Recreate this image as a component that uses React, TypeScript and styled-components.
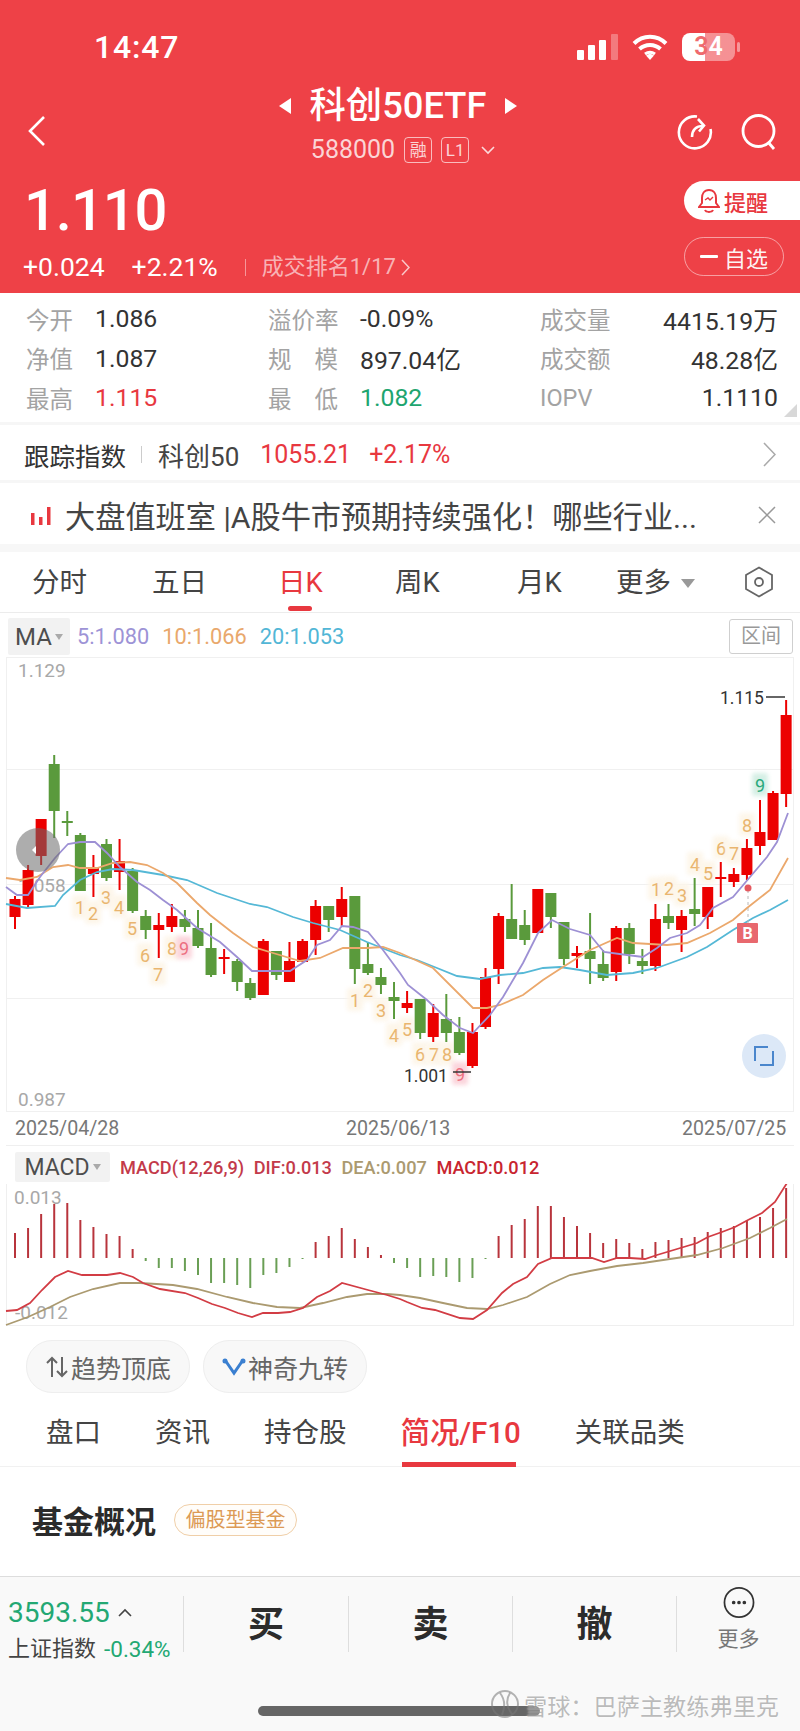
import React from 'react';
import styled, { createGlobalStyle } from 'styled-components';

const FONT = '"Roboto","Noto Sans CJK SC",sans-serif';
const RED = '#e8383f';

const Global = createGlobalStyle`
  html, body { margin: 0; padding: 0; background: #fff; }
  * { box-sizing: border-box; }
  body { font-family: ${FONT}; }
`;

const Page = styled.div`
  position: relative;
  width: 800px;
  height: 1731px;
  overflow: hidden;
  background: #fff;
`;

/* header */
const Header = styled.header`
  height: 293px;
  background: #ee4147;
  color: #fff;
  display: flex;
  flex-direction: column;
`;
const StatusBar = styled.div`
  height: 86px;
  padding: 8px 65px 0 94px;
  display: flex;
  align-items: center;
  justify-content: space-between;
`;
const Time = styled.div`
  font-size: 32px;
  font-weight: 500;
  letter-spacing: 0.8px;
`;
const StatusIcons = styled.div`
  display: flex;
  align-items: center;
  gap: 14px;
`;
const Battery = styled.div`
  position: relative;
  width: 53px;
  height: 28px;
  border-radius: 8px;
  background: linear-gradient(90deg, #fff 0 43%, rgba(255, 255, 255, 0.42) 43% 100%);
  font-size: 25px;
  font-weight: 600;
  line-height: 28px;
  text-align: center;
  &::after {
    content: '';
    position: absolute;
    right: -5px;
    top: 9px;
    width: 3px;
    height: 10px;
    border-radius: 2px;
    background: rgba(255, 255, 255, 0.45);
  }
`;
const BatteryDigit = styled.span<{ $c: string }>`
  color: ${p => p.$c};
`;
const NavRow = styled.div`
  height: 89px;
  padding: 0 22px 0 28px;
  display: grid;
  grid-template-columns: 1fr auto 1fr;
  align-items: center;
`;
const NavRight = styled.div`
  display: flex;
  justify-content: flex-end;
  gap: 28px;
  padding-top: 4px;
`;
const NavCenter = styled.div`
  align-self: start;
  display: flex;
  flex-direction: column;
  align-items: center;
  gap: 10px;
  margin-left: -10px;
`;
const TitleRow = styled.div`
  display: flex;
  align-items: center;
  gap: 19px;
  font-size: 36.3px;
  line-height: 40px;
  font-weight: 500;
`;
const SubRow = styled.div`
  display: flex;
  align-items: center;
  font-size: 25px;
  line-height: 28px;
  color: rgba(255, 255, 255, 0.78);
  margin-left: 10px;
`;
const Badge = styled.span`
  width: 28px;
  height: 26px;
  margin-left: 9px;
  border: 1px solid rgba(255, 255, 255, 0.65);
  border-radius: 4px;
  font-size: 17px;
  line-height: 24px;
  text-align: center;
`;
const QuoteRow = styled.div`
  flex: 1;
  display: flex;
  justify-content: space-between;
  align-items: flex-start;
  padding: 4px 0 0 23px;
`;
const PriceCol = styled.div`
  display: flex;
  flex-direction: column;
`;
const Price = styled.div`
  font-size: 58px;
  line-height: 62px;
  font-weight: 500;
  letter-spacing: -1.1px;
  margin-left: 1px;
`;
const ChangeRow = styled.div`
  display: flex;
  align-items: center;
  margin-top: 11px;
  font-size: 26.5px;
  line-height: 30px;
  font-weight: 400;
`;
const Change = styled.span`
  margin-right: 27px;
  &:last-of-type { margin-right: 19px; }
`;
const VBar = styled.i`
  width: 1px;
  height: 17px;
  background: rgba(255, 255, 255, 0.45);
  margin-right: 16px;
`;
const Rank = styled.span`
  display: flex;
  align-items: center;
  gap: 5px;
  font-size: 22px;
  font-weight: 400;
  color: rgba(255, 255, 255, 0.62);
`;
const ActionCol = styled.div`
  display: flex;
  flex-direction: column;
  gap: 17px;
  width: 116px;
  margin-top: 2px;
`;
const Remind = styled.div`
  height: 39px;
  border-radius: 20px 0 0 20px;
  background: #fff;
  color: ${RED};
  font-size: 22px;
  font-weight: 500;
  display: flex;
  align-items: center;
  padding-left: 14px;
  gap: 4px;
`;
const Watch = styled.div`
  width: 100px;
  height: 39px;
  border-radius: 20px;
  border: 1px solid rgba(255, 255, 255, 0.5);
  font-size: 22px;
  display: flex;
  align-items: center;
  justify-content: center;
  gap: 6px;
  color: rgba(255, 255, 255, 0.95);
`;

/* quote grid */
const QuoteGrid = styled.section`
  position: relative;
  height: 132px;
  padding: 6px 22px 0 26px;
  display: grid;
  grid-template-columns: 242px 272px 1fr;
  grid-auto-rows: 39.5px;
  border-bottom: 3px solid #f6f6f6;
`;
const Cell = styled.div`
  display: flex;
  align-items: center;
  font-size: 24.8px;
`;
const Label = styled.span<{ $w: number }>`
  width: ${p => p.$w}px;
  display: flex;
  justify-content: space-between;
  color: #a3a3a3;
  font-size: 23.5px;
  flex: none;
`;
const Spread = styled.span`
  width: 70px;
  display: flex;
  justify-content: space-between;
`;
const Value = styled.span<{ $c?: string; $end?: boolean }>`
  color: ${p => p.$c || '#333'};
  font-weight: 400;
  ${p => (p.$end ? 'margin-left: auto;' : '')}
`;
const Corner = styled.i`
  position: absolute;
  right: 3px;
  bottom: 5px;
  border-style: solid;
  border-width: 0 0 13px 13px;
  border-color: transparent transparent #d8d8d8 transparent;
`;

/* track */
const TrackRow = styled.section`
  height: 58px;
  padding: 4px 24px 0;
  display: flex;
  align-items: center;
  font-size: 25px;
  border-bottom: 3px solid #f6f6f6;
`;
const TrackTitle = styled.span`
  color: #333;
  font-size: 25.5px;
  margin-right: 15px;
`;
const TrackName = styled.span`
  color: #444;
  font-size: 26px;
  margin: 0 21px 0 16px;
`;
const TrackNum = styled.span`
  color: ${RED};
  font-weight: 400;
  font-size: 25px;
  margin-right: 18px;
`;
const TrackThin = styled.i`
  width: 1px;
  height: 17px;
  background: #ccc;
`;
const Push = styled.span`
  margin-left: auto;
  display: flex;
`;

/* news */
const NewsRow = styled.section`
  height: 69px;
  padding: 3px 24px 0 31px;
  display: flex;
  align-items: center;
  gap: 14px;
  border-bottom: 8px solid #f7f7f7;
`;
const NewsText = styled.span`
  font-size: 30.2px;
  color: #444;
  white-space: nowrap;
`;

/* K tabs */
const KTabs = styled.nav`
  position: relative;
  height: 61px;
  padding-left: 32px;
  display: flex;
  align-items: center;
  border-bottom: 1px solid #ececec;
`;
const KTab = styled.span<{ $x: number; $on?: boolean }>`
  position: absolute;
  left: ${p => p.$x}px;
  top: 13px;
  font-size: 27.5px;
  line-height: 36px;
  color: ${p => (p.$on ? RED : '#444')};
`;
const KMark = styled.i`
  position: absolute;
  left: 288px;
  bottom: 1px;
  width: 24px;
  height: 5px;
  border-radius: 3px;
  background: ${RED};
`;
const KTri = styled.i`
  position: absolute;
  left: 681px;
  top: 27px;
  border-style: solid;
  border-width: 9px 7px 0 7px;
  border-color: #999 transparent transparent transparent;
`;
const KGear = styled.span`
  position: absolute;
  left: 744px;
  top: 14px;
  display: flex;
`;

/* MA */
const MaRow = styled.section`
  height: 44px;
  padding: 3px 7px 0 8px;
  display: flex;
  align-items: center;
  font-size: 21.8px;
`;
const Chip = styled.div<{ $w: number }>`
  width: ${p => p.$w}px;
  height: 37px;
  background: #f2f2f2;
  border-radius: 2px;
  color: #4e4e4e;
  font-size: 24px;
  display: flex;
  align-items: center;
  justify-content: center;
  gap: 3px;
`;
const ChipTri = styled.i`
  border-style: solid;
  border-width: 6px 4.5px 0 4.5px;
  border-color: #aaa transparent transparent transparent;
`;
const MaVal = styled.span<{ $c: string; $first?: boolean }>`
  color: ${p => p.$c};
  margin-left: ${p => (p.$first ? 7 : 13)}px;
`;
const Range = styled.span`
  margin-left: auto;
  width: 64px;
  height: 35px;
  border: 1px solid #cfcfcf;
  border-radius: 3px;
  color: #999;
  font-size: 20px;
  line-height: 33px;
  text-align: center;
`;

/* charts */
const ChartSvg = styled.svg`
  display: block;
  width: 800px;
`;
const AxisText = styled.text`
  font-family: ${FONT};
  font-size: 19px;
  fill: #a8a8a8;
`;
const PeakText = styled.text`
  font-family: ${FONT};
  font-size: 17.5px;
  fill: #333;
`;
const TdText = styled.text<{ $c: string }>`
  font-family: ${FONT};
  font-size: 18px;
  text-anchor: middle;
  fill: ${p => p.$c};
`;
const TdGlow = styled.rect`
  filter: blur(2px);
`;
const BText = styled.text`
  font-family: ${FONT};
  font-size: 16px;
  font-weight: 700;
  fill: #fff;
  text-anchor: middle;
`;
const DateRow = styled.div`
  height: 34px;
  margin: 0 6px;
  padding: 0 8px 0 9px;
  display: grid;
  grid-template-columns: 331px 336px 1fr;
  align-items: center;
  font-size: 19.6px;
  color: #777;
  font-weight: 400;
  border-bottom: 1px solid #efefef;
`;
const MacdHead = styled.div`
  height: 38px;
  padding: 4px 0 0 15px;
  display: flex;
  align-items: center;
  font-size: 18.2px;
  font-weight: 500;
`;
const MacdChip = styled(Chip)`
  height: 30px;
  font-size: 23px;
  font-weight: 400;
  margin-right: 10px;
`;
const MacdItem = styled.span<{ $c: string; $last?: boolean }>`
  color: ${p => p.$c};
  margin-right: ${p => (p.$last ? 0 : 9.5)}px;
`;

/* pills */
const PillRow = styled.div`
  height: 67px;
  padding: 14px 0 0 26px;
  display: flex;
  gap: 13px;
`;
const Pill = styled.div`
  width: 164px;
  height: 53px;
  border: 1px solid #eeeeee;
  border-radius: 26px;
  background: #f8f8f8;
  color: #666;
  font-size: 25px;
  display: flex;
  align-items: center;
  justify-content: center;
  gap: 2px;
`;

/* lower tabs */
const InfoTabs = styled.nav`
  position: relative;
  height: 74px;
  display: flex;
  align-items: center;
  padding-left: 46px;
  font-size: 27.5px;
  color: #444;
  border-bottom: 1px solid #f1f1f1;
`;
const InfoTab = styled.span<{ $ml: number; $on?: boolean }>`
  margin-left: ${p => p.$ml}px;
  color: ${p => (p.$on ? RED : '#444')};
  font-size: ${p => (p.$on ? 29.5 : 27.5)}px;
  font-weight: ${p => (p.$on ? 500 : 400)};
`;
const InfoMark = styled.i`
  position: absolute;
  left: 402px;
  bottom: -1px;
  width: 114px;
  height: 5px;
  background: ${RED};
`;

/* fund */
const Fund = styled.section`
  height: 109px;
  padding: 0 0 4px 32px;
  display: flex;
  align-items: center;
  gap: 18px;
`;
const FundTitle = styled.h2`
  margin: 0;
  font-size: 31px;
  font-weight: 700;
  color: #2b2b2b;
`;
const FundTag = styled.span`
  width: 123px;
  height: 32px;
  border: 1px solid #f0cfa8;
  border-radius: 16px;
  background: #fffdfa;
  color: #dc9a55;
  font-size: 20px;
  line-height: 30px;
  text-align: center;
`;

/* bottom */
const Bottom = styled.footer`
  position: relative;
  height: 155px;
  background: #f9f9f9;
  border-top: 1px solid #dddddd;
`;
const BottomBar = styled.div`
  height: 92px;
  padding-top: 17px;
  display: grid;
  grid-template-columns: 183px 165px 164px 164px 1fr;
`;
const IndexCell = styled.div`
  padding-left: 8px;
  margin-top: -5px;
  display: flex;
  flex-direction: column;
  justify-content: center;
  gap: 3px;
`;
const IndexNum = styled.div`
  color: #23a873;
  font-size: 28px;
  line-height: 36px;
  font-weight: 400;
  display: flex;
  align-items: center;
  gap: 8px;
`;
const IndexSub = styled.div`
  display: flex;
  gap: 8px;
  font-size: 22px;
  line-height: 30px;
  color: #444;
`;
const IndexPct = styled.span`
  color: #23a873;
  font-weight: 400;
  font-size: 22.5px;
`;
const Trade = styled.div`
  border-left: 1px solid #dedede;
  height: 56px;
  margin-top: 2px;
  padding-bottom: 6px;
  display: flex;
  align-items: center;
  justify-content: center;
  font-size: 36px;
  font-weight: 700;
  color: #2c2c2c;
`;
const More = styled.div`
  height: 56px;
  margin-top: 2px;
  border-left: 1px solid #dedede;
  display: flex;
  flex-direction: column;
  align-items: center;
  gap: 8px;
  color: #777;
  font-size: 21px;
  line-height: 26px;
  & > svg { margin-top: -9px; }
`;
const Home = styled.i`
  position: absolute;
  left: 258px;
  top: 129px;
  width: 282px;
  height: 10px;
  border-radius: 5px;
  background: #666;
`;
const WaterMark = styled.div`
  position: absolute;
  left: 490px;
  top: 108px;
  display: flex;
  align-items: center;
  gap: 4px;
  font-size: 23.2px;
  color: rgba(120, 120, 120, 0.5);
  text-shadow: 0 0 2px rgba(255, 255, 255, 0.9);
  white-space: nowrap;
`;

/* data */
type C = [number, number, number, number, 'r' | 'g'];
const candles: C[] = [
  [896, 899, 917, 929, 'r'], [865, 870, 905, 908, 'r'], [819, 819, 856, 865, 'r'], [755, 764, 811, 838, 'g'],
  [811, 821, 823, 836, 'g'], [833, 835, 891, 891, 'g'], [855, 868, 874, 897, 'r'], [839, 844, 878, 881, 'g'],
  [839, 861, 872, 890, 'r'], [868, 871, 911, 913, 'g'], [910, 916, 930, 939, 'g'], [913, 925, 930, 958, 'r'],
  [904, 916, 927, 932, 'r'], [910, 919, 927, 932, 'g'], [910, 928, 946, 948, 'g'], [923, 948, 975, 977, 'g'],
  [949, 957, 959, 974, 'r'], [959, 961, 982, 991, 'g'], [978, 983, 998, 1000, 'g'], [939, 941, 995, 995, 'r'],
  [951, 951, 975, 980, 'g'], [942, 961, 982, 982, 'r'], [939, 941, 962, 962, 'r'], [900, 906, 940, 955, 'r'],
  [906, 906, 920, 932, 'g'], [887, 899, 917, 926, 'r'], [896, 896, 969, 984, 'g'], [942, 964, 973, 975, 'g'],
  [968, 977, 985, 994, 'g'], [982, 997, 1001, 1019, 'g'], [991, 1003, 1008, 1013, 'r'], [999, 999, 1033, 1039, 'g'],
  [1004, 1013, 1037, 1042, 'r'], [994, 1019, 1033, 1042, 'g'], [1017, 1032, 1053, 1055, 'g'], [1023, 1032, 1066, 1068, 'r'],
  [968, 977, 1027, 1029, 'r'], [913, 916, 969, 984, 'r'], [884, 919, 939, 939, 'g'], [910, 925, 940, 945, 'g'],
  [889, 889, 933, 933, 'r'], [893, 893, 917, 928, 'g'], [922, 922, 959, 965, 'g'], [946, 953, 956, 968, 'r'],
  [913, 951, 959, 984, 'g'], [950, 964, 978, 981, 'g'], [926, 928, 972, 981, 'r'], [923, 928, 954, 964, 'g'],
  [949, 961, 966, 974, 'g'], [904, 919, 966, 971, 'r'], [904, 916, 923, 929, 'g'], [910, 916, 930, 952, 'r'],
  [878, 909, 914, 926, 'g'], [887, 887, 917, 929, 'r'], [862, 877, 879, 897, 'r'], [868, 874, 882, 887, 'r'],
  [839, 848, 875, 880, 'r'], [800, 832, 846, 855, 'r'], [791, 793, 840, 840, 'r'], [700, 715, 794, 807, 'r'],
];
const cx = (i: number) => 15 + 13.07 * i;

const ma5 = '6,887 17,895 28,895 40,877 55,858 68,844 80,842 95,842 107,853 120,867 137,882 150,890 163,900 177,910 197,928 220,942 237,957 252,971 290,971 307,960 317,945 330,940 342,926 353,927 368,932 383,950 400,973 408,985 427,1000 443,1015 460,1028 473,1033 490,1015 503,997 523,963 538,933 552,920 570,929 590,935 604,952 627,955 643,957 657,948 670,938 687,933 700,925 713,908 733,897 750,877 767,857 777,842 788,813';
const ma10 = '6,878 20,880 37,877 53,867 68,865 80,868 97,868 113,863 130,862 147,865 163,873 177,883 197,903 210,915 233,933 253,947 273,953 300,961 320,958 343,948 367,948 383,947 400,953 433,968 473,1008 487,1008 500,1005 523,995 543,980 563,967 590,950 617,938 633,943 650,944 667,945 687,943 710,933 733,920 747,908 770,890 788,858';
const ma20 = '6,904 27,908 55,906 63,895 80,880 97,872 113,869 133,870 163,875 187,880 217,893 250,904 267,907 293,917 313,923 340,930 367,942 387,950 400,955 417,960 437,968 457,976 480,979 500,975 523,973 543,968 560,967 580,970 607,975 633,973 657,968 687,957 707,947 733,930 753,918 770,910 788,900';

type T = [number, number, string];
const td: T[] = [
  [80, 907, '1'], [93, 913, '2'], [106, 897, '3'], [119, 907, '4'], [132, 928, '5'], [145, 955, '6'], [158, 974, '7'], [172, 948, '8'],
  [355, 1000, '1'], [368, 990, '2'], [381, 1010, '3'], [394, 1035, '4'], [407, 1029, '5'], [420, 1054, '6'], [434, 1054, '7'], [447, 1054, '8'],
  [656, 889, '1'], [669, 888, '2'], [682, 895, '3'], [695, 864, '4'], [708, 873, '5'], [721, 848, '6'], [734, 853, '7'], [747, 825, '8'],
];

const macdTops = [1233, 1228, 1214, 1204, 1203, 1220, 1227, 1234, 1236, 1249, 1261, 1268, 1268, 1271, 1275, 1283, 1283, 1285, 1288, 1275, 1273, 1267, 1259, 1242, 1236, 1228, 1239, 1247, 1255, 1263, 1268, 1277, 1276, 1277, 1282, 1278, 1259, 1236, 1225, 1219, 1206, 1206, 1217, 1226, 1233, 1243, 1239, 1243, 1249, 1242, 1240, 1238, 1237, 1232, 1228, 1226, 1220, 1217, 1208, 1188];
const dif = '6,1311 17,1310 30,1303 42,1290 55,1277 68,1271 82,1275 107,1275 120,1273 133,1277 143,1283 160,1289 185,1293 198,1298 212,1304 225,1308 238,1313 252,1317 263,1313 278,1313 290,1312 303,1308 317,1297 330,1291 342,1283 368,1290 387,1295 400,1299 407,1302 422,1308 435,1310 460,1318 473,1319 487,1310 502,1293 513,1284 527,1277 538,1264 552,1258 592,1258 604,1262 617,1258 630,1258 645,1259 657,1255 697,1243 708,1237 722,1232 735,1227 748,1220 762,1213 775,1202 787,1183';
const dea = '6,1325 28,1317 50,1307 70,1297 93,1289 120,1283 140,1283 173,1285 197,1289 227,1297 253,1303 277,1307 300,1308 323,1303 347,1297 367,1294 387,1294 400,1295 420,1298 443,1303 467,1308 487,1309 503,1305 527,1297 550,1284 570,1275 590,1271 617,1266 643,1263 670,1259 697,1255 723,1248 750,1238 770,1228 787,1219';

const Candles = () => (
  <>
    {candles.map(([wt, bt, bb, wb, k], i) => {
      const col = k === 'r' ? '#ec0000' : '#5a9a3c';
      const x = cx(i);
      return (
        <g key={i}>
          <line x1={x} x2={x} y1={wt} y2={wb} stroke={col} strokeWidth={2} />
          <rect x={x - 5.5} y={bt} width={11} height={bb - bt} fill={col} />
        </g>
      );
    })}
  </>
);

const Digit = ({ x, y, s, bg, c }: { x: number; y: number; s: string; bg: string; c: string }) => (
  <g>
    <TdGlow x={x - 8} y={y - 12} width={16} height={23} rx={3} fill={bg} />
    <TdText x={x} y={y + 6.5} $c={c}>{s}</TdText>
  </g>
);

const MainChart = () => (
  <ChartSvg viewBox="0 657 800 455" height={455}>
    <g stroke="#f0f0f0" strokeWidth={1}>
      <line x1={6} x2={793} y1={657.5} y2={657.5} />
      <line x1={6} x2={793} y1={769.5} y2={769.5} />
      <line x1={6} x2={793} y1={884.5} y2={884.5} />
      <line x1={6} x2={793} y1={998.5} y2={998.5} />
      <line x1={6} x2={793} y1={1111.5} y2={1111.5} />
      <line x1={6.5} x2={6.5} y1={657} y2={1112} />
      <line x1={793.5} x2={793.5} y1={657} y2={1112} />
    </g>
    <AxisText x={18} y={677}>1.129</AxisText>
    <AxisText x={18} y={892}>1.058</AxisText>
    <AxisText x={18} y={1106}>0.987</AxisText>
    {td.map(([x, y, s], i) => (
      <Digit key={i} x={x} y={y} s={s} bg="#fdf6ea" c="#e9b56f" />
    ))}
    <Digit x={184} y={948} s="9" bg="#fbd5dc" c="#ec6f80" />
    <Digit x={460} y={1074} s="9" bg="#fbd5dc" c="#ec6f80" />
    <Digit x={760} y={785} s="9" bg="#d5efe5" c="#2aa97c" />
    <Candles />
    <polyline points={ma20} fill="none" stroke="#55b8d6" strokeWidth={1.8} />
    <polyline points={ma10} fill="none" stroke="#eba86c" strokeWidth={1.8} />
    <polyline points={ma5} fill="none" stroke="#9d90d4" strokeWidth={1.8} />
    <PeakText x={720} y={704}>1.115</PeakText>
    <line x1={766} x2={785} y1={697} y2={697} stroke="#333" strokeWidth={1.5} />
    <PeakText x={404} y={1082}>1.001</PeakText>
    <line x1={453} x2={471} y1={1072} y2={1072} stroke="#333" strokeWidth={1.5} />
    <line x1={748} x2={748} y1={890} y2={923} stroke="#b8b8b8" strokeWidth={1} strokeDasharray="3 3" />
    <circle cx={748} cy={888} r={3.5} fill="#e5585f" />
    <rect x={737} y={923} width={21} height={20} rx={1} fill="#e8686e" />
    <BText x={747.5} y={939}>B</BText>
    <circle cx={38} cy={850} r={22} fill="#6a6a6a" fillOpacity={0.55} />
    <path d="M36 846l-4 4 4 4z" fill="#fff" />
    <circle cx={764} cy={1056} r={22} fill="#dce8f7" />
    <path d="M755 1061v-14h13M773 1051v14h-13" fill="none" stroke="#4a86cc" strokeWidth={2} />
  </ChartSvg>
);

const MacdChart = () => (
  <ChartSvg viewBox="0 1184 800 142" height={142}>
    <g stroke="#efefef" strokeWidth={1}>
      <line x1={6} x2={793} y1={1325.5} y2={1325.5} />
      <line x1={6.5} x2={6.5} y1={1184} y2={1326} />
      <line x1={793.5} x2={793.5} y1={1184} y2={1326} />
    </g>
    <AxisText x={14} y={1204}>0.013</AxisText>
    <AxisText x={15} y={1319}>-0.012</AxisText>
    {macdTops.map((t, i) => (
      <line
        key={i}
        x1={cx(i)}
        x2={cx(i)}
        y1={t}
        y2={1258}
        stroke={t < 1258 ? '#b8343c' : '#6a9f55'}
        strokeWidth={2}
      />
    ))}
    <polyline points={dea} fill="none" stroke="#ab9a70" strokeWidth={1.8} />
    <polyline points={dif} fill="none" stroke="#d23c44" strokeWidth={1.8} />
  </ChartSvg>
);

export default function App() {
  return (
    <Page>
      <Global />
      <Header>
        <StatusBar>
          <Time>14:47</Time>
          <StatusIcons>
            <svg width="41" height="26" viewBox="0 0 41 26">
              <rect x="0" y="16" width="7" height="10" rx="1" fill="#fff" />
              <rect x="11" y="11" width="7" height="15" rx="1" fill="#fff" />
              <rect x="22" y="6" width="7" height="20" rx="1" fill="#fff" />
              <rect x="34" y="0" width="7" height="26" rx="1" fill="#fff" fillOpacity=".3" />
            </svg>
            <svg width="36" height="26" viewBox="0 0 36 26" fill="none" stroke="#fff" strokeWidth="4">
              <path d="M2 9.5c9-9 23-9 32 0" />
              <path d="M7.5 15c6-5.5 15-5.5 21 0" />
              <path d="M13 20c3-2.2 7-2.2 10 0" strokeWidth="3" />
              <path d="M14 21.5l4-2 4 2-4 4.5z" fill="#fff" stroke="none" />
            </svg>
            <Battery>
              <BatteryDigit $c="#ef6a6e">3</BatteryDigit>
              <BatteryDigit $c="#fff">4</BatteryDigit>
            </Battery>
          </StatusIcons>
        </StatusBar>
        <NavRow>
          <svg width="17" height="30" viewBox="0 0 17 30" fill="none" stroke="#fff" strokeWidth="2.6">
            <path d="M16 1L2 15l14 14" />
          </svg>
          <NavCenter>
            <TitleRow>
              <svg width="12" height="16" viewBox="0 0 12 16"><path d="M12 0v16L0 8z" fill="#fff" /></svg>
              <span>科创50ETF</span>
              <svg width="12" height="16" viewBox="0 0 12 16"><path d="M0 0v16l12-8z" fill="#fff" /></svg>
            </TitleRow>
            <SubRow>
              588000
              <Badge>融</Badge>
              <Badge>L1</Badge>
              <svg width="14" height="9" viewBox="0 0 14 9" fill="none" stroke="#fff" strokeOpacity=".8" strokeWidth="1.6" style={{ marginLeft: 12 }}>
                <path d="M1 1l6 6 6-6" />
              </svg>
            </SubRow>
          </NavCenter>
          <NavRight>
            <svg width="36" height="36" viewBox="0 0 36 36" fill="none" stroke="#fff" strokeWidth="2.6">
              <path d="M20 2.5A16 16 0 1 0 33.5 15" />
              <path d="M15 23c0-7 4-11 11-11" />
              <path d="M21 5l6 6.500-5 6" />
            </svg>
            <svg width="37" height="37" viewBox="0 0 37 37" fill="none" stroke="#fff" strokeWidth="2.8">
              <circle cx="17.500" cy="17" r="15.500" />
              <path d="M27 28l6 7" />
            </svg>
          </NavRight>
        </NavRow>
        <QuoteRow>
          <PriceCol>
            <Price>1.110</Price>
            <ChangeRow>
              <Change>+0.024</Change>
              <Change>+2.21%</Change>
              <VBar />
              <Rank>
                成交排名1/17
                <svg width="9" height="17" viewBox="0 0 9 17" fill="none" stroke="#fff" strokeOpacity=".7" strokeWidth="1.5">
                  <path d="M1 1l7 7.500-7 7.500" />
                </svg>
              </Rank>
            </ChangeRow>
          </PriceCol>
          <ActionCol>
            <Remind>
              <svg width="22" height="26" viewBox="0 0 22 26" fill="none" stroke="#e8383f" strokeWidth="2">
                <path d="M11 2c-5 0-7 4-7 8v5l-3 4h20l-3-4v-5c0-4-2-8-7-8z" />
                <path d="M7 22c1 2.500 7 2.500 8 0" />
                <path d="M7 12l3-2 2 2 3-3" strokeWidth="1.400" />
              </svg>
              提醒
            </Remind>
            <Watch>
              <svg width="18" height="3" viewBox="0 0 18 3"><rect width="18" height="3" rx="1" fill="#fff" /></svg>
              自选
            </Watch>
          </ActionCol>
        </QuoteRow>
      </Header>

      <QuoteGrid>
        <Cell><Label $w={69}>今开</Label><Value>1.086</Value></Cell>
        <Cell><Label $w={92}>溢价率</Label><Value>-0.09%</Value></Cell>
        <Cell><Label $w={72}>成交量</Label><Value $end>4415.19万</Value></Cell>
        <Cell><Label $w={69}>净值</Label><Value>1.087</Value></Cell>
        <Cell><Label $w={92}><Spread><span>规</span><span>模</span></Spread></Label><Value>897.04亿</Value></Cell>
        <Cell><Label $w={72}>成交额</Label><Value $end>48.28亿</Value></Cell>
        <Cell><Label $w={69}>最高</Label><Value $c={RED}>1.115</Value></Cell>
        <Cell><Label $w={92}><Spread><span>最</span><span>低</span></Spread></Label><Value $c="#1ea56f">1.082</Value></Cell>
        <Cell><Label $w={72}>IOPV</Label><Value $end>1.1110</Value></Cell>
        <Corner />
      </QuoteGrid>

      <TrackRow>
        <TrackTitle>跟踪指数</TrackTitle>
        <TrackThin />
        <TrackName>科创50</TrackName>
        <TrackNum>1055.21</TrackNum>
        <TrackNum>+2.17%</TrackNum>
        <Push>
          <svg width="13" height="25" viewBox="0 0 13 25" fill="none" stroke="#aaa" strokeWidth="1.600">
            <path d="M1 1l11 11.500-11 11.500" />
          </svg>
        </Push>
      </TrackRow>

      <NewsRow>
        <svg width="20" height="20" viewBox="0 0 20 20">
          <rect x="0" y="8" width="3.500" height="12" fill="#e8383f" />
          <rect x="8" y="12" width="3.500" height="8" fill="#e8383f" />
          <rect x="16" y="2" width="3.500" height="18" fill="#e8383f" />
        </svg>
        <NewsText>大盘值班室 |A股牛市预期持续强化！哪些行业...</NewsText>
        <Push>
          <svg width="18" height="18" viewBox="0 0 18 18" stroke="#999" strokeWidth="1.500">
            <path d="M1 1l16 16M17 1L1 17" />
          </svg>
        </Push>
      </NewsRow>

      <KTabs>
        <KTab $x={32}>分时</KTab>
        <KTab $x={152}>五日</KTab>
        <KTab $x={278} $on>日K</KTab>
        <KTab $x={395}>周K</KTab>
        <KTab $x={517}>月K</KTab>
        <KTab $x={616}>更多</KTab>
        <KTri />
        <KGear>
          <svg width="30" height="32" viewBox="0 0 30 32" fill="none" stroke="#666" strokeWidth="1.800">
            <path d="M15 1.500l13 7.500v14l-13 7.500-13-7.500v-14z" />
            <circle cx="15" cy="16" r="4" />
          </svg>
        </KGear>
        <KMark />
      </KTabs>

      <MaRow>
        <Chip $w={62}>MA<ChipTri /></Chip>
        <MaVal $c="#9d93d6" $first>5:1.080</MaVal>
        <MaVal $c="#e9a86c">10:1.066</MaVal>
        <MaVal $c="#52b6d6">20:1.053</MaVal>
        <Range>区间</Range>
      </MaRow>

      <MainChart />

      <DateRow>
        <span>2025/04/28</span>
        <span>2025/06/13</span>
        <span>2025/07/25</span>
      </DateRow>

      <MacdHead>
        <MacdChip $w={95}>MACD<ChipTri /></MacdChip>
        <MacdItem $c="#c33a4a">MACD(12,26,9)</MacdItem>
        <MacdItem $c="#c33a4a">DIF:0.013</MacdItem>
        <MacdItem $c="#ab9a70">DEA:0.007</MacdItem>
        <MacdItem $c="#c8252f" $last>MACD:0.012</MacdItem>
      </MacdHead>
      <MacdChart />

      <PillRow>
        <Pill>
          <svg width="24" height="24" viewBox="0 0 24 24" fill="none" stroke="#666" strokeWidth="2">
            <path d="M7 22V3M2 8l5-5 5 5" />
            <path d="M17 2v19M12 16l5 5 5-5" />
          </svg>
          趋势顶底
        </Pill>
        <Pill>
          <svg width="24" height="20" viewBox="0 0 24 20" fill="none" stroke="#3a7fd0" strokeWidth="3">
            <path d="M3 3l9 13 9-13" />
            <circle cx="3" cy="4" r="1" />
            <circle cx="21" cy="4" r="1" />
          </svg>
          神奇九转
        </Pill>
      </PillRow>

      <InfoTabs>
        <InfoTab $ml={0}>盘口</InfoTab>
        <InfoTab $ml={54}>资讯</InfoTab>
        <InfoTab $ml={54}>持仓股</InfoTab>
        <InfoTab $ml={54} $on>简况/F10</InfoTab>
        <InfoTab $ml={54}>关联品类</InfoTab>
        <InfoMark />
      </InfoTabs>

      <Fund>
        <FundTitle>基金概况</FundTitle>
        <FundTag>偏股型基金</FundTag>
      </Fund>

      <Bottom>
        <BottomBar>
          <IndexCell>
            <IndexNum>
              3593.55
              <svg width="14" height="9" viewBox="0 0 14 9" fill="none" stroke="#444" strokeWidth="1.600">
                <path d="M1 8l6-6 6 6" />
              </svg>
            </IndexNum>
            <IndexSub>上证指数<IndexPct>-0.34%</IndexPct></IndexSub>
          </IndexCell>
          <Trade>买</Trade>
          <Trade>卖</Trade>
          <Trade>撤</Trade>
          <More>
            <svg width="32" height="32" viewBox="0 0 32 32" fill="none" stroke="#333" strokeWidth="1.800">
              <circle cx="16" cy="16" r="15" />
              <circle cx="10.500" cy="16" r="1" fill="#333" />
              <circle cx="16" cy="16" r="1" fill="#333" />
              <circle cx="21.500" cy="16" r="1" fill="#333" />
            </svg>
            更多
          </More>
        </BottomBar>
        <Home />
        <WaterMark>
          <svg width="30" height="40" viewBox="0 0 30 40" fill="none" stroke="rgba(120,120,120,.55)" strokeWidth="2">
            <path d="M15 6a13 13 0 1 0 0 26c7 0 13-6 13-13S22 6 15 6z" />
            <path d="M10 8c4 5 6 12 2 22M20 8c-4 6-4 14 2 21" />
          </svg>
          雪球：巴萨主教练弗里克
        </WaterMark>
      </Bottom>
    </Page>
  );
}
